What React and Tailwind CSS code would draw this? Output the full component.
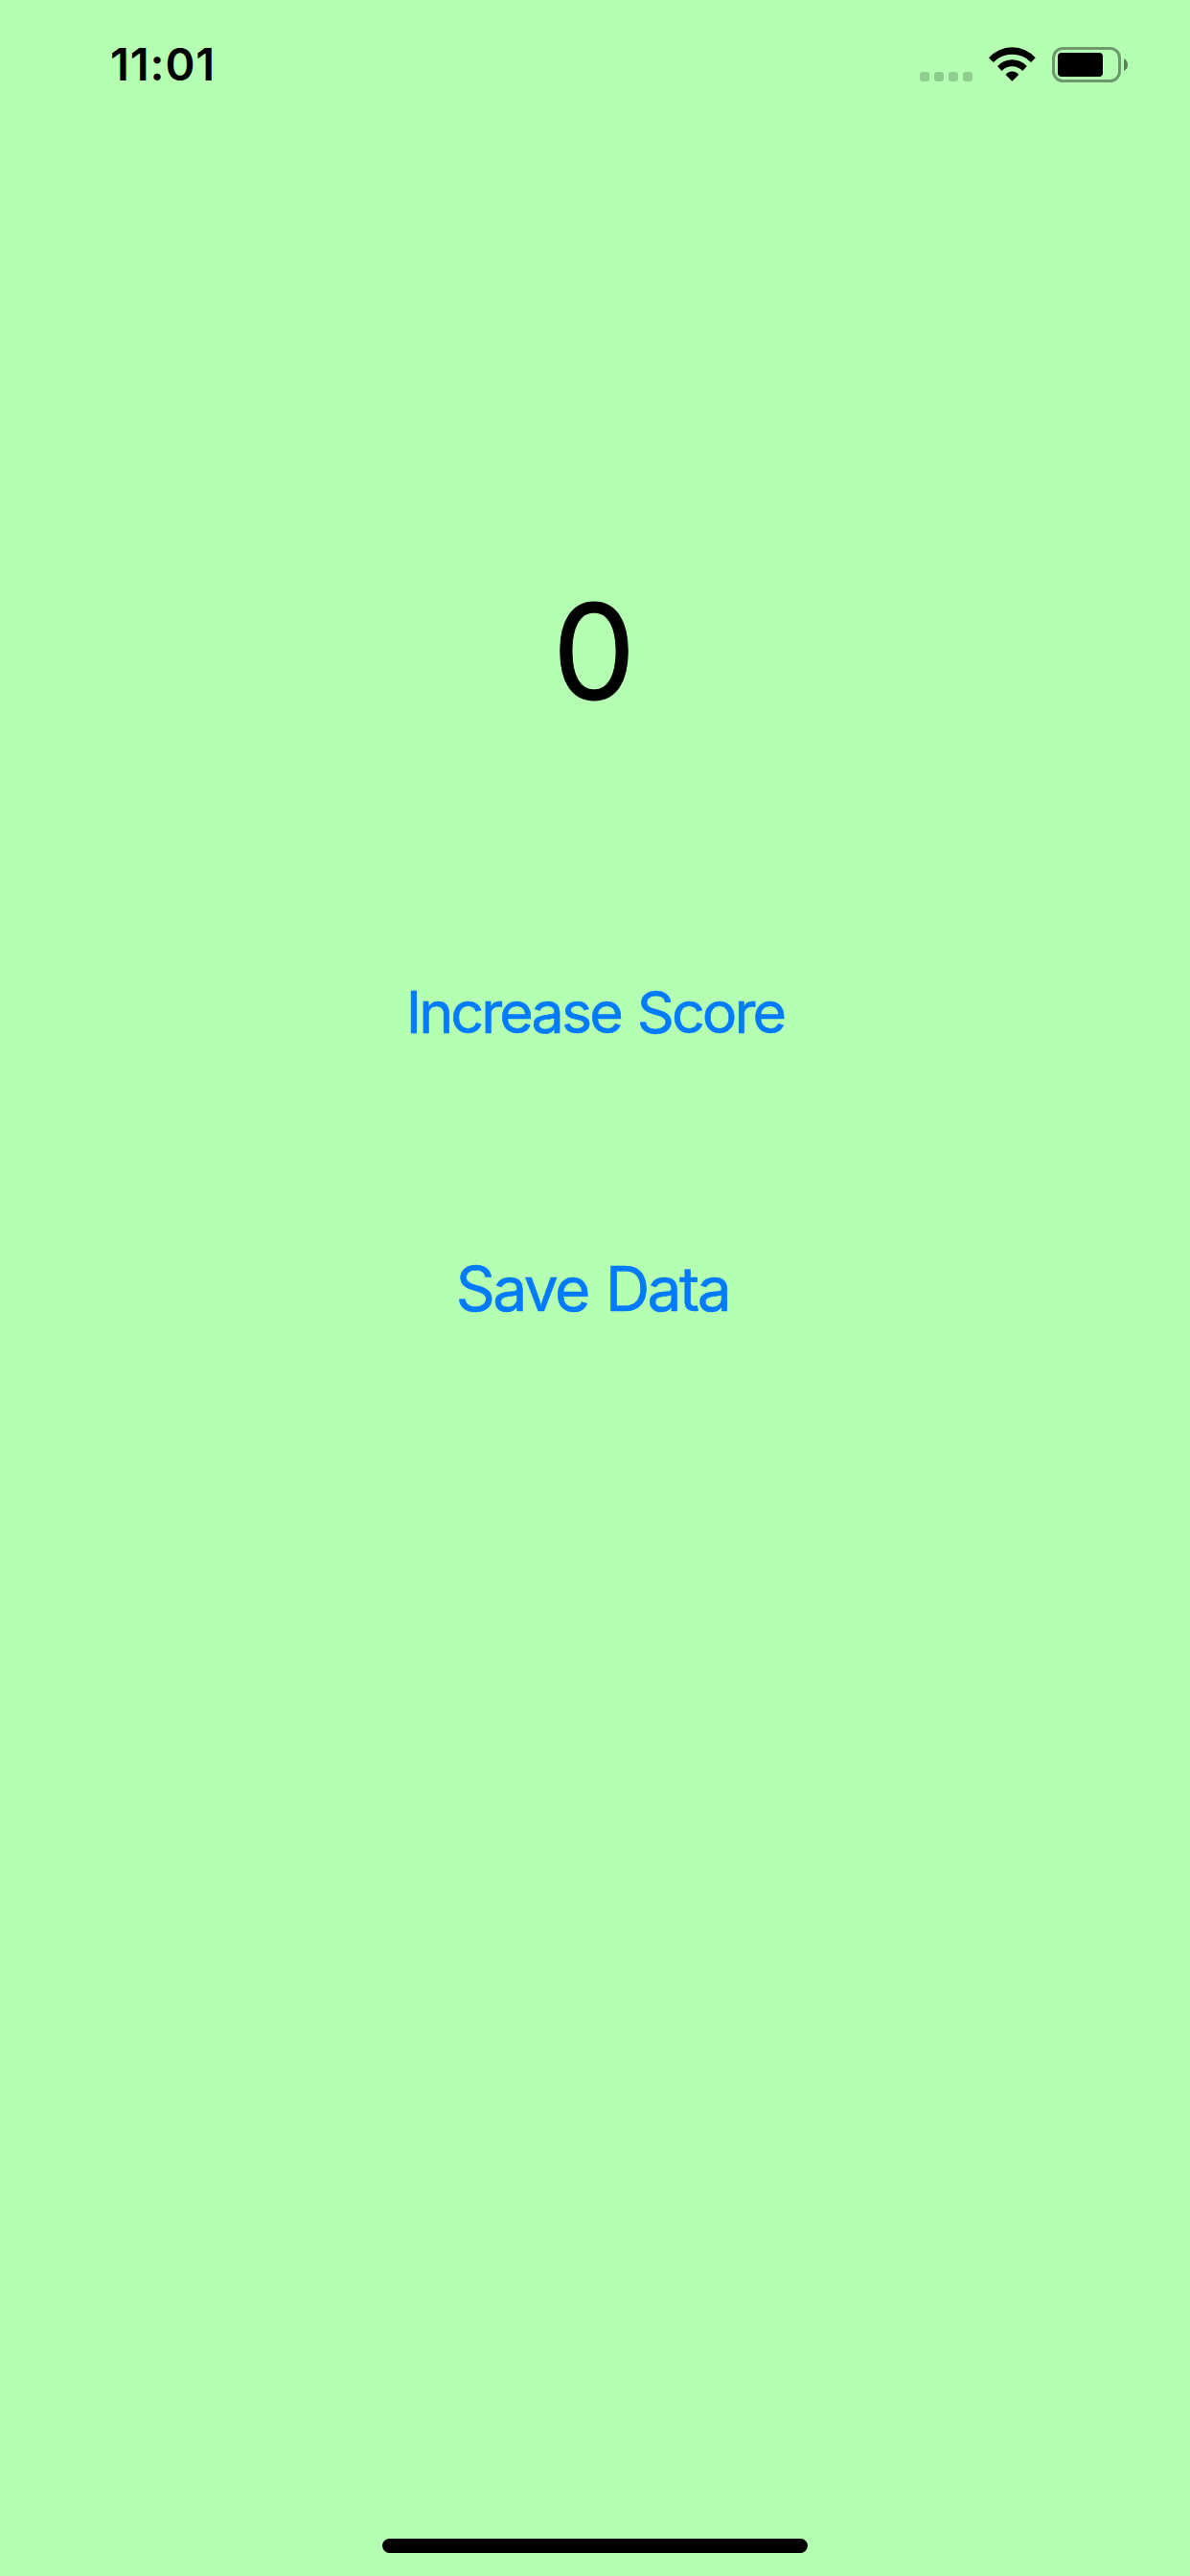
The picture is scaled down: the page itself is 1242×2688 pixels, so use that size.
import React from "react";

function StatusBar() {
  return (
    <header className="flex h-[136px] items-center justify-between pl-[115px] pr-[65px]">
      <time className="-mt-[2px] text-[47px] font-semibold leading-[48px] tracking-[0.9px] text-black">11:01</time>
      <div className="flex items-center">
        <div className="mt-6 mr-[16px] flex gap-[5px]">
          <span className="size-[10px] rounded-[3px] bg-black/20" />
          <span className="size-[10px] rounded-[3px] bg-black/20" />
          <span className="size-[10px] rounded-[3px] bg-black/20" />
          <span className="size-[10px] rounded-[3px] bg-black/20" />
        </div>
        <svg className="mr-[16px] h-[38px] w-[51px]" viewBox="0 0 51 38" aria-label="Wi-Fi">
          <path d="M1 11.3A32.5 32.5 0 0 1 49.8 11.3L45 16A27.3 27.3 0 0 0 5.8 16Z" />
          <path d="M10 19.9A21 21 0 0 1 40.8 19.9L36.3 25A15 15 0 0 0 14.5 25Z" />
          <path d="M18.6 29A8.3 8.3 0 0 1 32.2 29L25.4 35.8Z" />
        </svg>
        <svg className="h-[38px] w-[79px]" viewBox="0 0 79 38" aria-label="Battery">
          <rect x="1.5" y="1.5" width="69" height="34" rx="10" fill="none" stroke="#000" strokeOpacity=".4" strokeWidth="3" />
          <rect x="6" y="6" width="47" height="25" rx="4" />
          <path d="M75 12Q79 14 79 18.5T75 25Z" fillOpacity=".5" />
        </svg>
      </div>
    </header>
  );
}

export default function App() {
  return (
    <div className="flex h-[2688px] w-[1242px] flex-col bg-[#b4ffb2] font-['Inter',sans-serif]">
      <StatusBar />
      <main className="flex flex-1 flex-col items-center pt-[464px]">
        <output className="pr-[2px] text-[138px] leading-[160px] text-black [-webkit-text-stroke:0.8px]">0</output>
        <button className="mt-[256px] text-[61px] leading-[80px] tracking-[-2.9px] [word-spacing:2.5px] text-[#007aff] [-webkit-text-stroke:0.6px]">Increase Score</button>
        <button className="mt-[209px] pr-[5px] text-[64px] leading-[80px] tracking-[-2.5px] [word-spacing:2.5px] text-[#007aff] [-webkit-text-stroke:0.6px]">Save Data</button>
      </main>
      <div className="mb-[24px] h-[15px] w-[444px] self-center rounded-full bg-black" />
    </div>
  );
}
